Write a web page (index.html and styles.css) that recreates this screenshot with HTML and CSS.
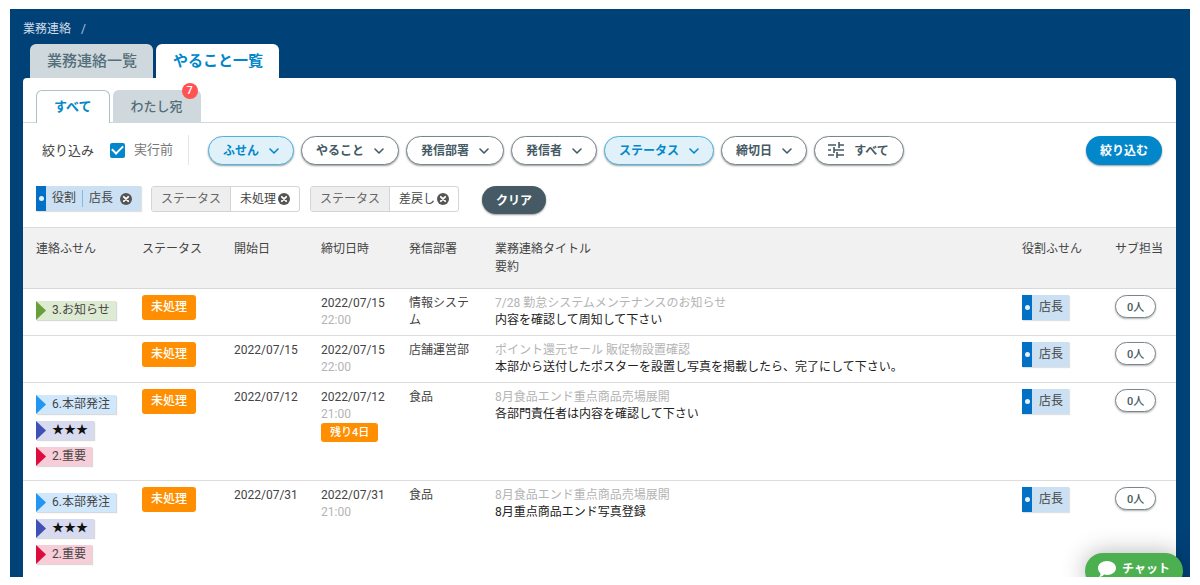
FILE: index.html
```html
<!DOCTYPE html>
<html lang="ja">
<head>
<meta charset="utf-8">
<meta name="viewport" content="width=device-width, initial-scale=1">
<title>やること一覧</title>
<link rel="stylesheet" href="styles.css">
</head>
<body>
<svg class="sprite" aria-hidden="true">
  <symbol id="chevron" viewBox="0 0 10 10"><path d="M1 3l4 4 4-4" fill="none" stroke="currentColor" stroke-width="1.6" stroke-linecap="round" stroke-linejoin="round"/></symbol>
  <symbol id="remove" viewBox="0 0 12 12"><circle cx="6" cy="6" r="6" fill="currentColor"/><path d="M3.8 3.8l4.4 4.4M8.2 3.8L3.8 8.2" stroke="#fff" stroke-width="1.8" stroke-linecap="round"/></symbol>
</svg>
<div class="app">
  <nav class="breadcrumb"><a href="#">業務連絡</a><span>/</span></nav>
  <nav class="tabs">
    <a class="tab" href="#">業務連絡一覧</a>
    <a class="tab tab-active" href="#" aria-current="page">やること一覧</a>
  </nav>
  <main class="panel">
    <nav class="subtabs">
      <a class="subtab subtab-active" href="#" aria-current="page">すべて</a>
      <a class="subtab" href="#">わたし宛<span class="count">7</span></a>
    </nav>
    <div class="filters">
      <span class="filters-label">絞り込み</span>
      <label class="check"><input type="checkbox" checked>実行前</label>
      <div class="pills">
        <button class="pill pill-on" type="button">ふせん<svg class="chev"><use href="#chevron"/></svg></button>
        <button class="pill" type="button">やること<svg class="chev"><use href="#chevron"/></svg></button>
        <button class="pill" type="button">発信部署<svg class="chev"><use href="#chevron"/></svg></button>
        <button class="pill" type="button">発信者<svg class="chev"><use href="#chevron"/></svg></button>
        <button class="pill pill-on" type="button">ステータス<svg class="chev"><use href="#chevron"/></svg></button>
        <button class="pill" type="button">締切日<svg class="chev"><use href="#chevron"/></svg></button>
        <button class="pill pill-all" type="button"><svg class="tune" viewBox="0 0 16 16"><path d="M0 3h8M11 3h5M11 0v6M0 8h3M6 8h10M6 5v6M0 13h6M9 13h7M9 10v6" fill="none" stroke="currentColor" stroke-width="1.6"/></svg>すべて</button>
      </div>
      <button class="submit" type="button">絞り込む</button>
    </div>
    <div class="chips">
      <span class="chip-role"><span class="strip"></span><span class="role-key">役割</span><span class="role-value">店長</span><button class="remove" type="button" aria-label="役割 店長を削除"><svg><use href="#remove"/></svg></button></span>
      <span class="chip"><span class="chip-key">ステータス</span><span class="chip-value">未処理<button class="remove" type="button" aria-label="未処理を削除"><svg><use href="#remove"/></svg></button></span></span>
      <span class="chip"><span class="chip-key">ステータス</span><span class="chip-value">差戻し<button class="remove" type="button" aria-label="差戻しを削除"><svg><use href="#remove"/></svg></button></span></span>
      <button class="clear" type="button">クリア</button>
    </div>
    <table class="tasks">
      <colgroup><col class="col-tag"><col class="col-status"><col class="col-start"><col class="col-due"><col class="col-dept"><col><col class="col-role"><col class="col-sub"></colgroup>
      <thead>
        <tr><th scope="col">連絡ふせん</th><th scope="col">ステータス</th><th scope="col">開始日</th><th scope="col">締切日時</th><th scope="col">発信部署</th><th scope="col">業務連絡タイトル<br>要約</th><th scope="col">役割ふせん</th><th scope="col">サブ担当</th></tr>
      </thead>
      <tbody>
        <tr>
          <td class="tags"><span class="tag tag-green">3.お知らせ</span></td>
          <td><span class="status">未処理</span></td>
          <td></td>
          <td>2022/07/15<div class="muted">22:00</div></td>
          <td>情報システム</td>
          <td><div class="muted">7/28 勤怠システムメンテナンスのお知らせ</div><div class="summary">内容を確認して周知して下さい</div></td>
          <td><span class="role"><span class="strip"></span>店長</span></td>
          <td><button class="people" type="button">0人</button></td>
        </tr>
        <tr>
          <td class="tags"></td>
          <td><span class="status">未処理</span></td>
          <td>2022/07/15</td>
          <td>2022/07/15<div class="muted">22:00</div></td>
          <td>店舗運営部</td>
          <td><div class="muted">ポイント還元セール 販促物設置確認</div><div class="summary">本部から送付したポスターを設置し写真を掲載したら、完了にして下さい。</div></td>
          <td><span class="role"><span class="strip"></span>店長</span></td>
          <td><button class="people" type="button">0人</button></td>
        </tr>
        <tr>
          <td class="tags"><span class="tag tag-blue">6.本部発注</span><span class="tag tag-indigo">★★★</span><span class="tag tag-red">2.重要</span></td>
          <td><span class="status">未処理</span></td>
          <td>2022/07/12</td>
          <td>2022/07/12<div class="muted">21:00</div><span class="remain">残り4日</span></td>
          <td>食品</td>
          <td><div class="muted">8月食品エンド重点商品売場展開</div><div class="summary">各部門責任者は内容を確認して下さい</div></td>
          <td><span class="role"><span class="strip"></span>店長</span></td>
          <td><button class="people" type="button">0人</button></td>
        </tr>
        <tr>
          <td class="tags"><span class="tag tag-blue">6.本部発注</span><span class="tag tag-indigo">★★★</span><span class="tag tag-red">2.重要</span></td>
          <td><span class="status">未処理</span></td>
          <td>2022/07/31</td>
          <td>2022/07/31<div class="muted">21:00</div></td>
          <td>食品</td>
          <td><div class="muted">8月食品エンド重点商品売場展開</div><div class="summary">8月重点商品エンド写真登録</div></td>
          <td><span class="role"><span class="strip"></span>店長</span></td>
          <td><button class="people" type="button">0人</button></td>
        </tr>
      </tbody>
    </table>
  </main>
  <button class="chat" type="button"><svg viewBox="0 0 18 16"><path d="M9 0c5 0 9 3 9 7s-4 7-9 7c-1 0-2-.1-3-.4C5 15 3 16 1 16c1-1 1.500-2.300 1.500-3.600C1 11 0 9 0 7c0-4 4-7 9-7z" fill="#fff"/></svg>チャット</button>
</div>
</body>
</html>
```
FILE: styles.css
```css
* { box-sizing: border-box; }

body {
  margin: 0;
  height: 100vh;
  padding: 9px 10px 8px;
  background: #fff;
  color: #444;
  font: 12px/17px Roboto, "Noto Sans CJK JP", sans-serif;
}

button { font-family: inherit; cursor: pointer; }
a { text-decoration: none; }
.sprite { display: none; }

.app {
  position: relative;
  display: flex;
  flex-direction: column;
  height: 100%;
  padding: 12px 14px 0 13px;
  overflow: hidden;
  background: #004178;
}

.breadcrumb { display: flex; flex: none; gap: 10px; height: 23px; color: #b4c8da; }
.breadcrumb a { color: #d0dce6; }

.tabs { display: flex; flex: none; gap: 3px; padding-left: 7px; }
.tab {
  padding: 0 16px 0 17px;
  border-radius: 6px 6px 0 0;
  background: #cfd8dc;
  color: #546e7a;
  font-size: 15px;
  font-weight: 500;
  line-height: 34px;
}
.tab-active { background: #fff; color: #0288ca; font-weight: 700; }

.panel { flex: 1 0 auto; border-radius: 4px 4px 0 0; background: #fff; }

.subtabs {
  display: flex;
  gap: 3px;
  padding: 12px 13px 0;
  border-bottom: 1px solid #cfd8dc;
}
.subtab {
  position: relative;
  padding: 0 17px;
  border: 1px solid #cfd8dc;
  border-bottom: 0;
  border-radius: 6px 6px 0 0;
  background: #cfd8dc;
  color: #546e7a;
  font-size: 13px;
  font-weight: 500;
  line-height: 31px;
}
.subtab-active {
  margin-bottom: -1px;
  border-color: #b0bec5;
  background: #fff;
  color: #0288ca;
  font-weight: 700;
}
.count {
  position: absolute;
  top: -8px;
  right: 2px;
  width: 16px;
  border-radius: 8px;
  background: #ff5252;
  color: #fff;
  font-size: 11px;
  line-height: 16px;
  text-align: center;
}

.filters { display: flex; align-items: center; padding: 12px 14px 0 19px; }
.filters-label { margin-right: 16px; font-size: 13px; }
.check {
  display: flex;
  align-items: center;
  gap: 9px;
  padding-right: 15px;
  border-right: 1px solid #e4e4e4;
  color: #777;
  font-size: 13px;
  line-height: 30px;
}
.check input {
  display: grid;
  place-items: center;
  width: 15px;
  height: 15px;
  margin: 0;
  border-radius: 2px;
  appearance: none;
  background: #0288ca;
}
.check input::after {
  content: "";
  width: 5px;
  height: 9px;
  margin-bottom: 3px;
  border: solid #fff;
  border-width: 0 2px 2px 0;
  transform: rotate(45deg);
}
.pills { display: flex; gap: 7px; margin-left: 19px; }
.pill {
  display: flex;
  align-items: center;
  gap: 10px;
  height: 29px;
  padding: 0 14px 2px;
  border: 1px solid #78868d;
  border-radius: 15px;
  background: #fff;
  box-shadow: 0 1px 2px rgba(0, 0, 0, .4);
  color: #455a64;
  font-size: 12px;
  font-weight: 700;
  white-space: nowrap;
}
.pill-on { border-color: #4fb3e0; background: #e1f1f9; color: #0288ca; }
.pill-all { padding-left: 13px; }
.chev { width: 10px; height: 10px; margin-top: 3px; }
.tune { width: 16px; height: 16px; margin-top: 2px; }
.submit, .clear {
  border: 0;
  border-radius: 15px;
  box-shadow: 0 1px 2px rgba(0, 0, 0, .4);
  color: #fff;
  font-size: 12px;
  font-weight: 700;
}
.submit { height: 29px; margin-left: auto; padding: 0 14px 2px; background: #0288ca; }

.chips { display: flex; align-items: flex-start; gap: 10px; padding: 21px 13px 13px; }
.remove { display: flex; padding: 0; border: 0; background: none; color: #555; }
.remove svg { width: 12px; height: 12px; }
.strip {
  display: grid;
  place-items: center;
  align-self: stretch;
  width: 10px;
  background: #0270c4;
}
.strip::after { content: ""; width: 5px; height: 5px; border-radius: 50%; background: #e3f2fd; }
.chip-role {
  display: flex;
  align-items: center;
  height: 25px;
  padding-right: 9px;
  background: #cbe1f3;
  box-shadow: 1px 1px 1px rgba(0, 0, 0, .12);
}
.role-key { padding: 0 6px; }
.role-value { padding: 0 7px 0 6px; border-left: 1px solid #80bce8; }
.chip {
  display: flex;
  height: 26px;
  overflow: hidden;
  border: 1px solid #d4d4d4;
  border-radius: 3px;
  line-height: 24px;
}
.chip-key { padding: 0 9px; border-right: 1px solid #d4d4d4; background: #eee; color: #666; }
.chip-value { display: flex; align-items: center; gap: 2px; padding: 0 9px; }
.clear { height: 28px; margin-left: 13px; padding: 0 14px 2px; background: #455a64; }

.tasks { width: 100%; border-collapse: separate; border-spacing: 0; table-layout: fixed; }
.col-tag { width: 106px; }
.col-status { width: 92px; }
.col-start { width: 87px; }
.col-due { width: 88px; }
.col-dept { width: 86px; }
.col-role { width: 93px; }
.col-sub { width: 74px; }
.tasks th {
  padding: 12px 0 12px 13px;
  border-top: 1px solid #ddd;
  border-bottom: 1px solid #d8d8d8;
  background: #f1f1f1;
  font-weight: 400;
  line-height: 18px;
  text-align: left;
  vertical-align: top;
}
.tasks td {
  padding: 6px 10px 6px 13px;
  border-bottom: 1px solid #ddd;
  vertical-align: top;
}
.tasks .tags { padding: 12px 0 7px 13px; }
.muted { color: #b4b4b4; }
.summary { color: #222; }

.tag {
  display: block;
  width: fit-content;
  margin-bottom: 7px;
  padding: 0 6px 0 16px;
  box-shadow: 1px 1px 1px rgba(0, 0, 0, .15);
  line-height: 19px;
  white-space: nowrap;
}
.tag::before {
  content: "";
  float: left;
  width: 10px;
  height: 19px;
  margin-left: -16px;
  background: var(--mark);
  clip-path: polygon(0 0, 100% 50%, 0 100%);
}
.tag-green { --mark: #689f38; background: #deebd3; }
.tag-blue { --mark: #2196f3; background: #d1e8fc; }
.tag-indigo { --mark: #3f51b5; background: #d8daef; color: #111; }
.tag-red { --mark: #dc0c3c; background: #f7cdd7; }

.status, .remain {
  display: block;
  width: fit-content;
  border-radius: 3px;
  background: #ff8f00;
  color: #fff;
  font-weight: 500;
  white-space: nowrap;
}
.status { padding: 0 9px; line-height: 25px; }
.remain { padding: 0 9px; font-size: 11px; line-height: 19px; }
.role {
  display: flex;
  align-items: center;
  gap: 7px;
  width: fit-content;
  height: 25px;
  padding-right: 6px;
  background: #cbe1f3;
  box-shadow: 1px 1px 1px rgba(0, 0, 0, .12);
  white-space: nowrap;
}
.people {
  display: block;
  height: 23px;
  padding: 0 11px 2px;
  border: 1px solid #78868d;
  border-radius: 12px;
  background: #fff;
  box-shadow: 0 1px 2px rgba(0, 0, 0, .3);
  color: #455a64;
  font-size: 11px;
  font-weight: 500;
  white-space: nowrap;
}

.chat {
  position: absolute;
  right: 7px;
  bottom: -12px;
  display: flex;
  align-items: center;
  gap: 6px;
  height: 36px;
  padding: 0 13px 4px;
  border: 0;
  border-radius: 18px;
  background: #4caf50;
  box-shadow: 0 0 24px rgba(0, 0, 0, .3);
  color: #fff;
  font-size: 12px;
  font-weight: 700;
  line-height: 12px;
}
.chat svg { width: 18px; height: 16px; }
```
